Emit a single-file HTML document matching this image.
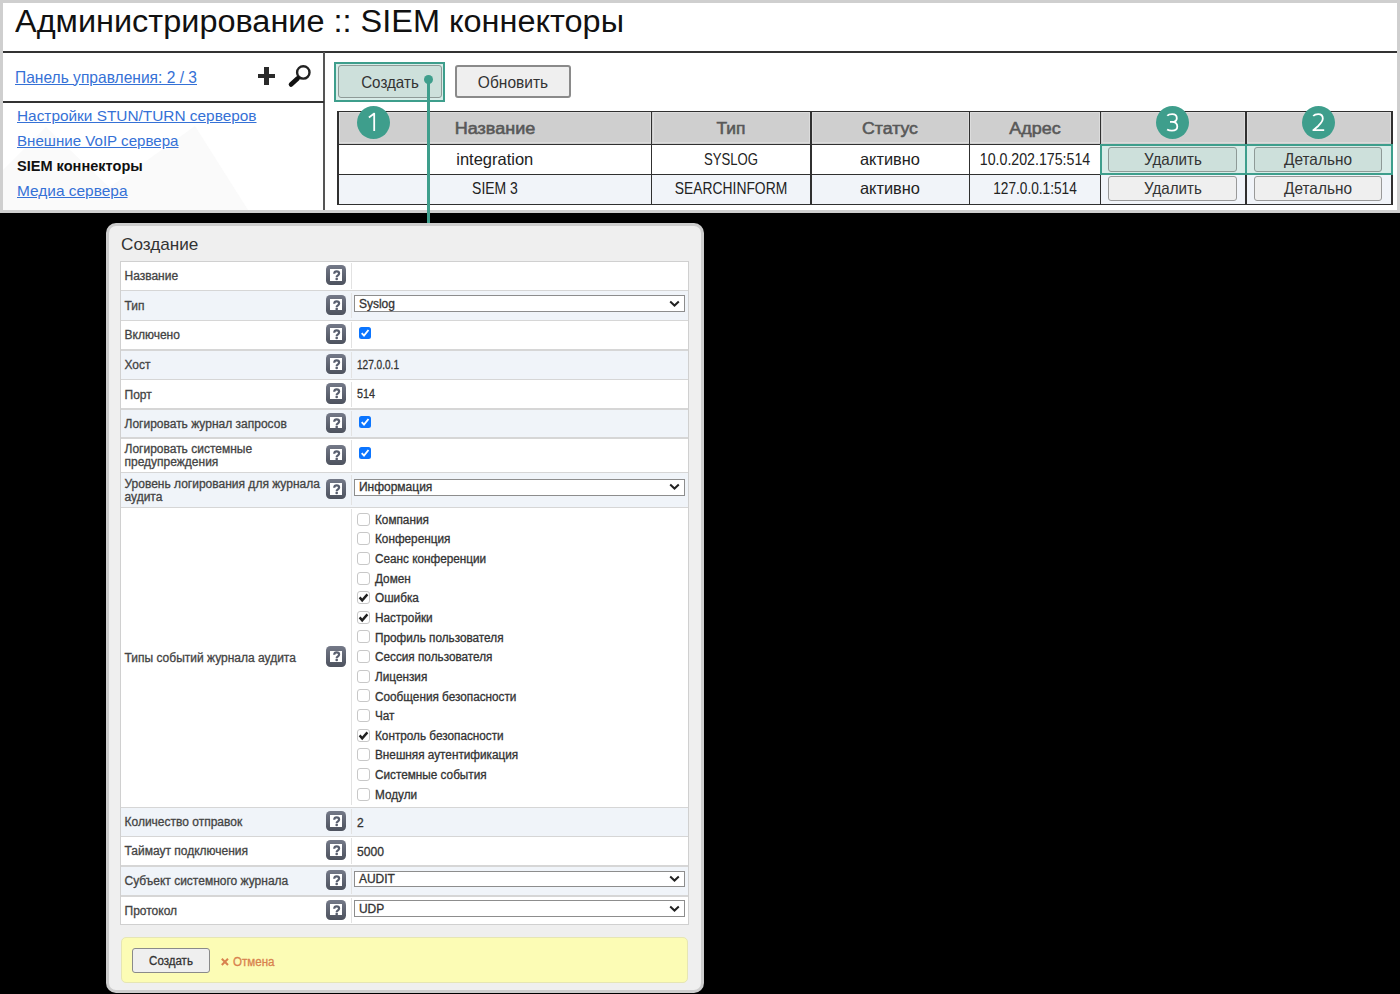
<!DOCTYPE html>
<html><head><meta charset="utf-8"><style>
html,body{margin:0;padding:0;background:#000;}
body{width:1400px;height:994px;background:#000;position:relative;overflow:hidden;font-family:"Liberation Sans", sans-serif;}
body>div,body>svg{position:absolute;}
.hi{width:20.4px;height:20.4px;border-radius:4.5px;background:linear-gradient(#747988,#4d525e);}
.hi i{position:absolute;left:4.7px;top:4.2px;width:11.6px;height:11.6px;background:#fff;}
</style></head><body>
<div style="left:0px;top:0px;width:1400px;height:213px;background:#cfcfcf;"></div>
<div style="left:3px;top:3px;width:1394px;height:207px;background:#fff;"></div>
<div id="t1" style="left:15px;transform-origin:0 50%;top:6px;font-size:31px;line-height:31px;color:#111;font-weight:400;white-space:nowrap;transform:scaleX(1.0471);"><span>Администрирование :: SIEM коннекторы</span></div>
<div style="left:3px;top:51px;width:1394px;height:2px;background:#333;"></div>
<div style="left:323px;top:52px;width:2px;height:158px;background:#555;"></div>
<div style="left:3px;top:101px;width:321px;height:2px;background:#333;"></div>
<svg style="left:3px;top:120px" width="300" height="90"><polygon points="-40,90 43,7 130,90" fill="#fafafa"/><polygon points="75,90 192,6 245,90" fill="#fafafa"/></svg>
<div id="t2" style="left:15px;transform-origin:0 50%;top:68.8px;font-size:16.5px;line-height:16.5px;color:#3571d6;font-weight:400;white-space:nowrap;transform:scaleX(0.9437);text-decoration:underline;"><span>Панель управления: 2 / 3</span></div>
<div style="left:258px;top:73.5px;width:17px;height:4.6px;background:#2a2a2a;"></div>
<div style="left:264px;top:67px;width:5px;height:18px;background:#2a2a2a;"></div>
<svg style="left:285px;top:62px" width="26" height="28"><circle cx="18.3" cy="10.4" r="6.2" fill="none" stroke="#222" stroke-width="2.4"/><line x1="6" y1="22.5" x2="12.6" y2="16.5" stroke="#111" stroke-width="4.6" stroke-linecap="round"/></svg>
<div id="t3" style="left:16.5px;transform-origin:0 50%;top:109.4px;font-size:14.5px;line-height:14.5px;color:#3571d6;font-weight:400;white-space:nowrap;transform:scaleX(1.0609);text-decoration:underline;"><span>Настройки STUN/TURN серверов</span></div>
<div id="t4" style="left:16.5px;transform-origin:0 50%;top:133.5px;font-size:14.5px;line-height:14.5px;color:#3571d6;font-weight:400;white-space:nowrap;transform:scaleX(1.0413);text-decoration:underline;"><span>Внешние VoIP сервера</span></div>
<div id="t5" style="left:16.5px;transform-origin:0 50%;top:159px;font-size:14.5px;line-height:14.5px;color:#111;font-weight:700;white-space:nowrap;transform:scaleX(1.0036);"><span>SIEM коннекторы</span></div>
<div id="t6" style="left:16.5px;transform-origin:0 50%;top:183.6px;font-size:14.5px;line-height:14.5px;color:#3571d6;font-weight:400;white-space:nowrap;transform:scaleX(1.0649);text-decoration:underline;"><span>Медиа сервера</span></div>
<div style="left:334.2px;top:62.3px;width:110.9px;height:39.8px;border:2px solid #3e9e8c;box-sizing:border-box;background:#d9ece8;"></div>
<div style="left:337.5px;top:65.3px;width:104.2px;height:33.2px;border:1.6px solid #8e9a97;border-radius:3px;box-sizing:border-box;background:#cde0db;"></div>
<div id="t7" style="left:-10.5px;width:800px;text-align:center;transform-origin:50% 50%;top:74px;font-size:16.5px;line-height:16.5px;color:#333;font-weight:400;white-space:nowrap;transform:scaleX(0.9200);"><span>Создать</span></div>
<div style="left:455px;top:65.3px;width:116px;height:32.6px;border:2px solid #8a8a8a;border-radius:3px;box-sizing:border-box;background:#efefef;"></div>
<div id="t8" style="left:113px;width:800px;text-align:center;transform-origin:50% 50%;top:73.6px;font-size:16.5px;line-height:16.5px;color:#333;font-weight:400;white-space:nowrap;transform:scaleX(0.9409);"><span>Обновить</span></div>
<div style="left:338px;top:111px;width:1054px;height:33px;background:#cfcfcf;"></div>
<div style="left:338px;top:144px;width:1054px;height:30px;background:#fff;"></div>
<div style="left:338px;top:174px;width:1054px;height:30.5px;background:#f1f4f9;"></div>
<div style="left:339px;top:112px;width:311.7px;height:31.4px;box-shadow:inset 0 0 0 1px #dcdcdc;"></div>
<div style="left:652.5px;top:112px;width:157.40000000000003px;height:31.4px;box-shadow:inset 0 0 0 1px #dcdcdc;"></div>
<div style="left:811.7px;top:112px;width:156.89999999999992px;height:31.4px;box-shadow:inset 0 0 0 1px #dcdcdc;"></div>
<div style="left:970.4px;top:112px;width:129.3px;height:31.4px;box-shadow:inset 0 0 0 1px #dcdcdc;"></div>
<div style="left:1101.5px;top:112px;width:143.7px;height:31.4px;box-shadow:inset 0 0 0 1px #dcdcdc;"></div>
<div style="left:1247px;top:112px;width:143.90000000000003px;height:31.4px;box-shadow:inset 0 0 0 1px #dcdcdc;"></div>
<div style="left:337.2px;top:110.7px;width:1055.3px;height:1.6px;background:#303030;"></div>
<div style="left:337.2px;top:143.7px;width:1055.3px;height:1.6px;background:#303030;"></div>
<div style="left:337.2px;top:173.7px;width:1055.3px;height:1.6px;background:#303030;"></div>
<div style="left:337.2px;top:203.7px;width:1055.3px;height:1.6px;background:#303030;"></div>
<div style="left:337.3px;top:110.7px;width:1.6px;height:94.4px;background:#303030;"></div>
<div style="left:650.8px;top:110.7px;width:1.6px;height:94.4px;background:#303030;"></div>
<div style="left:810.0px;top:110.7px;width:1.6px;height:94.4px;background:#303030;"></div>
<div style="left:968.6999999999999px;top:110.7px;width:1.6px;height:94.4px;background:#303030;"></div>
<div style="left:1099.8px;top:110.7px;width:1.6px;height:94.4px;background:#303030;"></div>
<div style="left:1245.3px;top:110.7px;width:1.6px;height:94.4px;background:#303030;"></div>
<div style="left:1391.0px;top:110.7px;width:1.6px;height:94.4px;background:#303030;"></div>
<div id="t9" style="left:94.75px;width:800px;text-align:center;transform-origin:50% 50%;top:120.4px;font-size:16.5px;line-height:16.5px;color:#585858;font-weight:400;white-space:nowrap;transform:scaleX(1.0918);-webkit-text-stroke:0.55px #585858;"><span>Название</span></div>
<div id="t10" style="left:331.1px;width:800px;text-align:center;transform-origin:50% 50%;top:120.4px;font-size:16.5px;line-height:16.5px;color:#585858;font-weight:400;white-space:nowrap;transform:scaleX(1.0539);-webkit-text-stroke:0.55px #585858;"><span>Тип</span></div>
<div id="t11" style="left:490.04999999999995px;width:800px;text-align:center;transform-origin:50% 50%;top:120.4px;font-size:16.5px;line-height:16.5px;color:#585858;font-weight:400;white-space:nowrap;transform:scaleX(1.0734);-webkit-text-stroke:0.55px #585858;"><span>Статус</span></div>
<div id="t12" style="left:634.95px;width:800px;text-align:center;transform-origin:50% 50%;top:120.4px;font-size:16.5px;line-height:16.5px;color:#585858;font-weight:400;white-space:nowrap;transform:scaleX(1.0878);-webkit-text-stroke:0.55px #585858;"><span>Адрес</span></div>
<div id="t13" style="left:94.75px;width:800px;text-align:center;transform-origin:50% 50%;top:150.7px;font-size:16.5px;line-height:16.5px;color:#222;font-weight:400;white-space:nowrap;"><span>integration</span></div>
<div id="t14" style="left:331.1px;width:800px;text-align:center;transform-origin:50% 50%;top:150.7px;font-size:16.5px;line-height:16.5px;color:#222;font-weight:400;white-space:nowrap;transform:scaleX(0.7956);"><span>SYSLOG</span></div>
<div id="t15" style="left:490.04999999999995px;width:800px;text-align:center;transform-origin:50% 50%;top:150.7px;font-size:16.5px;line-height:16.5px;color:#222;font-weight:400;white-space:nowrap;transform:scaleX(0.9930);"><span>активно</span></div>
<div id="t16" style="left:634.95px;width:800px;text-align:center;transform-origin:50% 50%;top:150.7px;font-size:16.5px;line-height:16.5px;color:#222;font-weight:400;white-space:nowrap;transform:scaleX(0.8594);"><span>10.0.202.175:514</span></div>
<div id="t17" style="left:94.75px;width:800px;text-align:center;transform-origin:50% 50%;top:180.4px;font-size:16.5px;line-height:16.5px;color:#222;font-weight:400;white-space:nowrap;transform:scaleX(0.8464);"><span>SIEM 3</span></div>
<div id="t18" style="left:331.1px;width:800px;text-align:center;transform-origin:50% 50%;top:180.4px;font-size:16.5px;line-height:16.5px;color:#222;font-weight:400;white-space:nowrap;transform:scaleX(0.8398);"><span>SEARCHINFORM</span></div>
<div id="t19" style="left:490.04999999999995px;width:800px;text-align:center;transform-origin:50% 50%;top:180.4px;font-size:16.5px;line-height:16.5px;color:#222;font-weight:400;white-space:nowrap;transform:scaleX(0.9930);"><span>активно</span></div>
<div id="t20" style="left:634.95px;width:800px;text-align:center;transform-origin:50% 50%;top:180.4px;font-size:16.5px;line-height:16.5px;color:#222;font-weight:400;white-space:nowrap;transform:scaleX(0.8282);"><span>127.0.0.1:514</span></div>
<div style="left:1100px;top:143.5px;width:292.5px;height:31px;border:2px solid #3e9e8c;box-sizing:border-box;background:#d9ece8;"></div>
<div style="left:1245px;top:143.5px;width:2px;height:31px;background:#3e9e8c;"></div>
<div style="left:1108px;top:146.9px;width:129px;height:25px;border:1.5px solid #8e9a97;border-radius:3px;box-sizing:border-box;background:#cde0db;"></div>
<div style="left:1108px;top:176px;width:129px;height:25.2px;border:1.5px solid #999;border-radius:3px;box-sizing:border-box;background:#efefef;"></div>
<div id="t21" style="left:772.5px;width:800px;text-align:center;transform-origin:50% 50%;top:150.6px;font-size:16.5px;line-height:16.5px;color:#333;font-weight:400;white-space:nowrap;transform:scaleX(0.9175);"><span>Удалить</span></div>
<div id="t22" style="left:772.5px;width:800px;text-align:center;transform-origin:50% 50%;top:179.8px;font-size:16.5px;line-height:16.5px;color:#333;font-weight:400;white-space:nowrap;transform:scaleX(0.9175);"><span>Удалить</span></div>
<div style="left:1254.4px;top:146.9px;width:128.0999999999999px;height:25px;border:1.5px solid #8e9a97;border-radius:3px;box-sizing:border-box;background:#cde0db;"></div>
<div style="left:1254.4px;top:176px;width:128.0999999999999px;height:25.2px;border:1.5px solid #999;border-radius:3px;box-sizing:border-box;background:#efefef;"></div>
<div id="t23" style="left:918.45px;width:800px;text-align:center;transform-origin:50% 50%;top:150.6px;font-size:16.5px;line-height:16.5px;color:#333;font-weight:400;white-space:nowrap;transform:scaleX(0.9331);"><span>Детально</span></div>
<div id="t24" style="left:918.45px;width:800px;text-align:center;transform-origin:50% 50%;top:179.8px;font-size:16.5px;line-height:16.5px;color:#333;font-weight:400;white-space:nowrap;transform:scaleX(0.9331);"><span>Детально</span></div>
<div style="left:427.4px;top:80px;width:2.2px;height:144px;background:#3e9e8c;"></div>
<div style="left:423.7px;top:75.4px;width:9px;height:9px;border-radius:50%;background:#3e9e8c;"></div>
<svg style="left:356.5px;top:105.7px" width="33" height="33"><circle cx="16.5" cy="16.5" r="16.5" fill="#3e9e8c"/><path d="M11.9 11.4 L17.2 7.6 L17.2 25" fill="none" stroke="#fff" stroke-width="1.8" stroke-linejoin="round"/></svg>
<svg style="left:1156.2px;top:105.6px" width="33" height="33"><circle cx="16.5" cy="16.5" r="16.5" fill="#3e9e8c"/><path d="M11.3 9.8 C12.5 8.3 14.2 8.2 16.2 8.2 C19.3 8.2 20.8 9.9 20.8 12.2 C20.8 14.6 18.8 15.9 16 15.9 L14 15.9 M16 15.9 C19.4 15.9 21.3 17.8 21.3 20.6 C21.3 23.3 19.2 24.7 15.9 24.7 C13.8 24.7 12.3 24.2 11.1 23.4" fill="none" stroke="#fff" stroke-width="1.8" stroke-linejoin="round"/></svg>
<svg style="left:1301.9px;top:105.7px" width="33" height="33"><circle cx="16.5" cy="16.5" r="16.5" fill="#3e9e8c"/><path d="M11.2 10 C12.4 8.6 14.1 8.1 16.2 8.1 C19.2 8.1 20.8 9.9 20.8 12.6 C20.8 15.3 18.9 17.4 16.5 19.7 L11.3 24.2 L22.2 24.2" fill="none" stroke="#fff" stroke-width="1.8" stroke-linejoin="round"/></svg>
<div style="left:106px;top:223px;width:598px;height:770px;box-sizing:border-box;border:3px solid #cdcdcd;border-radius:10px;background:#efefef;"></div>
<div id="t25" style="left:121px;transform-origin:0 50%;top:235.6px;font-size:17px;line-height:17px;color:#333;font-weight:400;white-space:nowrap;transform:scaleX(1.0093);"><span>Создание</span></div>
<div style="left:120px;top:261px;width:568.5px;height:664.4px;background:#fff;border:1px solid #d0d0d0;box-sizing:border-box;"></div>
<div style="left:121px;top:290.6px;width:566.5px;height:29.599999999999966px;background:#f0f4f9;"></div>
<div style="left:121px;top:349.9px;width:566.5px;height:29.700000000000045px;background:#f0f4f9;"></div>
<div style="left:121px;top:408.8px;width:566.5px;height:29.30000000000001px;background:#f0f4f9;"></div>
<div style="left:121px;top:472.6px;width:566.5px;height:34.799999999999955px;background:#f0f4f9;"></div>
<div style="left:121px;top:807.3px;width:566.5px;height:29.0px;background:#f0f4f9;"></div>
<div style="left:121px;top:865.7px;width:566.5px;height:30.09999999999991px;background:#f0f4f9;"></div>
<div style="left:121px;top:289.90000000000003px;width:566.5px;height:1.5px;background:#d6d6d6;"></div>
<div style="left:121px;top:319.5px;width:566.5px;height:1.5px;background:#d6d6d6;"></div>
<div style="left:121px;top:349.2px;width:566.5px;height:1.5px;background:#d6d6d6;"></div>
<div style="left:121px;top:378.90000000000003px;width:566.5px;height:1.5px;background:#d6d6d6;"></div>
<div style="left:121px;top:408.1px;width:566.5px;height:1.5px;background:#d6d6d6;"></div>
<div style="left:121px;top:437.40000000000003px;width:566.5px;height:1.5px;background:#d6d6d6;"></div>
<div style="left:121px;top:471.90000000000003px;width:566.5px;height:1.5px;background:#d6d6d6;"></div>
<div style="left:121px;top:506.7px;width:566.5px;height:1.5px;background:#d6d6d6;"></div>
<div style="left:121px;top:806.5999999999999px;width:566.5px;height:1.5px;background:#d6d6d6;"></div>
<div style="left:121px;top:835.5999999999999px;width:566.5px;height:1.5px;background:#d6d6d6;"></div>
<div style="left:121px;top:865.0px;width:566.5px;height:1.5px;background:#d6d6d6;"></div>
<div style="left:121px;top:895.0999999999999px;width:566.5px;height:1.5px;background:#d6d6d6;"></div>
<div id="t26" style="left:124.5px;transform-origin:0 50%;top:270.1px;font-size:12px;line-height:12px;color:#444;font-weight:400;white-space:nowrap;-webkit-text-stroke:0.3px #444;"><span>Название</span></div>
<div class="hi" style="left:325.8px;top:264.9px;"><i></i><svg width="21" height="21" style="position:absolute;left:0;top:0"><path d="M8.2 8.8 C8.3 7.1 9.4 6.4 10.6 6.4 C12.1 6.4 13.1 7.3 13.1 8.5 C13.1 9.6 12.4 10.1 11.7 10.6 C11 11.1 10.7 11.4 10.7 12.1" fill="none" stroke="#585e6e" stroke-width="2.2"/><circle cx="10.7" cy="13.9" r="1.3" fill="#585e6e"/></svg></div>
<div style="left:350.5px;top:263px;width:1.5px;height:25.600000000000023px;background:#e2e2e2;"></div>
<div id="t27" style="left:124.5px;transform-origin:0 50%;top:299.7px;font-size:12px;line-height:12px;color:#444;font-weight:400;white-space:nowrap;-webkit-text-stroke:0.3px #444;"><span>Тип</span></div>
<div class="hi" style="left:325.8px;top:294.5px;"><i></i><svg width="21" height="21" style="position:absolute;left:0;top:0"><path d="M8.2 8.8 C8.3 7.1 9.4 6.4 10.6 6.4 C12.1 6.4 13.1 7.3 13.1 8.5 C13.1 9.6 12.4 10.1 11.7 10.6 C11 11.1 10.7 11.4 10.7 12.1" fill="none" stroke="#585e6e" stroke-width="2.2"/><circle cx="10.7" cy="13.9" r="1.3" fill="#585e6e"/></svg></div>
<div style="left:350.5px;top:292.6px;width:1.5px;height:25.599999999999966px;background:#e2e2e2;"></div>
<div id="t28" style="left:124.5px;transform-origin:0 50%;top:329.34999999999997px;font-size:12px;line-height:12px;color:#444;font-weight:400;white-space:nowrap;-webkit-text-stroke:0.3px #444;"><span>Включено</span></div>
<div class="hi" style="left:325.8px;top:324.1px;"><i></i><svg width="21" height="21" style="position:absolute;left:0;top:0"><path d="M8.2 8.8 C8.3 7.1 9.4 6.4 10.6 6.4 C12.1 6.4 13.1 7.3 13.1 8.5 C13.1 9.6 12.4 10.1 11.7 10.6 C11 11.1 10.7 11.4 10.7 12.1" fill="none" stroke="#585e6e" stroke-width="2.2"/><circle cx="10.7" cy="13.9" r="1.3" fill="#585e6e"/></svg></div>
<div style="left:350.5px;top:322.2px;width:1.5px;height:25.69999999999999px;background:#e2e2e2;"></div>
<div id="t29" style="left:124.5px;transform-origin:0 50%;top:359.05px;font-size:12px;line-height:12px;color:#444;font-weight:400;white-space:nowrap;-webkit-text-stroke:0.3px #444;"><span>Хост</span></div>
<div class="hi" style="left:325.8px;top:353.9px;"><i></i><svg width="21" height="21" style="position:absolute;left:0;top:0"><path d="M8.2 8.8 C8.3 7.1 9.4 6.4 10.6 6.4 C12.1 6.4 13.1 7.3 13.1 8.5 C13.1 9.6 12.4 10.1 11.7 10.6 C11 11.1 10.7 11.4 10.7 12.1" fill="none" stroke="#585e6e" stroke-width="2.2"/><circle cx="10.7" cy="13.9" r="1.3" fill="#585e6e"/></svg></div>
<div style="left:350.5px;top:351.9px;width:1.5px;height:25.700000000000045px;background:#e2e2e2;"></div>
<div id="t30" style="left:124.5px;transform-origin:0 50%;top:388.50000000000006px;font-size:12px;line-height:12px;color:#444;font-weight:400;white-space:nowrap;-webkit-text-stroke:0.3px #444;"><span>Порт</span></div>
<div class="hi" style="left:325.8px;top:383.3px;"><i></i><svg width="21" height="21" style="position:absolute;left:0;top:0"><path d="M8.2 8.8 C8.3 7.1 9.4 6.4 10.6 6.4 C12.1 6.4 13.1 7.3 13.1 8.5 C13.1 9.6 12.4 10.1 11.7 10.6 C11 11.1 10.7 11.4 10.7 12.1" fill="none" stroke="#585e6e" stroke-width="2.2"/><circle cx="10.7" cy="13.9" r="1.3" fill="#585e6e"/></svg></div>
<div style="left:350.5px;top:381.6px;width:1.5px;height:25.19999999999999px;background:#e2e2e2;"></div>
<div id="t31" style="left:124.5px;transform-origin:0 50%;top:417.75000000000006px;font-size:12px;line-height:12px;color:#444;font-weight:400;white-space:nowrap;-webkit-text-stroke:0.3px #444;"><span>Логировать журнал запросов</span></div>
<div class="hi" style="left:325.8px;top:412.6px;"><i></i><svg width="21" height="21" style="position:absolute;left:0;top:0"><path d="M8.2 8.8 C8.3 7.1 9.4 6.4 10.6 6.4 C12.1 6.4 13.1 7.3 13.1 8.5 C13.1 9.6 12.4 10.1 11.7 10.6 C11 11.1 10.7 11.4 10.7 12.1" fill="none" stroke="#585e6e" stroke-width="2.2"/><circle cx="10.7" cy="13.9" r="1.3" fill="#585e6e"/></svg></div>
<div style="left:350.5px;top:410.8px;width:1.5px;height:25.30000000000001px;background:#e2e2e2;"></div>
<div id="t32" style="left:124.5px;transform-origin:0 50%;top:443.05px;font-size:12px;line-height:12px;color:#444;font-weight:400;white-space:nowrap;-webkit-text-stroke:0.3px #444;"><span>Логировать системные</span></div>
<div id="t33" style="left:124.5px;transform-origin:0 50%;top:456.35px;font-size:12px;line-height:12px;color:#444;font-weight:400;white-space:nowrap;-webkit-text-stroke:0.3px #444;"><span>предупреждения</span></div>
<div class="hi" style="left:325.8px;top:444.5px;"><i></i><svg width="21" height="21" style="position:absolute;left:0;top:0"><path d="M8.2 8.8 C8.3 7.1 9.4 6.4 10.6 6.4 C12.1 6.4 13.1 7.3 13.1 8.5 C13.1 9.6 12.4 10.1 11.7 10.6 C11 11.1 10.7 11.4 10.7 12.1" fill="none" stroke="#585e6e" stroke-width="2.2"/><circle cx="10.7" cy="13.9" r="1.3" fill="#585e6e"/></svg></div>
<div style="left:350.5px;top:440.1px;width:1.5px;height:30.5px;background:#e2e2e2;"></div>
<div id="t34" style="left:124.5px;transform-origin:0 50%;top:477.7px;font-size:12px;line-height:12px;color:#444;font-weight:400;white-space:nowrap;-webkit-text-stroke:0.3px #444;"><span>Уровень логирования для журнала</span></div>
<div id="t35" style="left:124.5px;transform-origin:0 50%;top:491.0px;font-size:12px;line-height:12px;color:#444;font-weight:400;white-space:nowrap;-webkit-text-stroke:0.3px #444;"><span>аудита</span></div>
<div class="hi" style="left:325.8px;top:479.1px;"><i></i><svg width="21" height="21" style="position:absolute;left:0;top:0"><path d="M8.2 8.8 C8.3 7.1 9.4 6.4 10.6 6.4 C12.1 6.4 13.1 7.3 13.1 8.5 C13.1 9.6 12.4 10.1 11.7 10.6 C11 11.1 10.7 11.4 10.7 12.1" fill="none" stroke="#585e6e" stroke-width="2.2"/><circle cx="10.7" cy="13.9" r="1.3" fill="#585e6e"/></svg></div>
<div style="left:350.5px;top:474.6px;width:1.5px;height:30.799999999999955px;background:#e2e2e2;"></div>
<div id="t36" style="left:124.5px;transform-origin:0 50%;top:651.6499999999999px;font-size:12px;line-height:12px;color:#444;font-weight:400;white-space:nowrap;-webkit-text-stroke:0.3px #444;"><span>Типы событий журнала аудита</span></div>
<div class="hi" style="left:325.8px;top:646.4px;"><i></i><svg width="21" height="21" style="position:absolute;left:0;top:0"><path d="M8.2 8.8 C8.3 7.1 9.4 6.4 10.6 6.4 C12.1 6.4 13.1 7.3 13.1 8.5 C13.1 9.6 12.4 10.1 11.7 10.6 C11 11.1 10.7 11.4 10.7 12.1" fill="none" stroke="#585e6e" stroke-width="2.2"/><circle cx="10.7" cy="13.9" r="1.3" fill="#585e6e"/></svg></div>
<div style="left:350.5px;top:509.4px;width:1.5px;height:295.9px;background:#e2e2e2;"></div>
<div id="t37" style="left:124.5px;transform-origin:0 50%;top:816.0999999999999px;font-size:12px;line-height:12px;color:#444;font-weight:400;white-space:nowrap;-webkit-text-stroke:0.3px #444;"><span>Количество отправок</span></div>
<div class="hi" style="left:325.8px;top:810.9px;"><i></i><svg width="21" height="21" style="position:absolute;left:0;top:0"><path d="M8.2 8.8 C8.3 7.1 9.4 6.4 10.6 6.4 C12.1 6.4 13.1 7.3 13.1 8.5 C13.1 9.6 12.4 10.1 11.7 10.6 C11 11.1 10.7 11.4 10.7 12.1" fill="none" stroke="#585e6e" stroke-width="2.2"/><circle cx="10.7" cy="13.9" r="1.3" fill="#585e6e"/></svg></div>
<div style="left:350.5px;top:809.3px;width:1.5px;height:25.0px;background:#e2e2e2;"></div>
<div id="t38" style="left:124.5px;transform-origin:0 50%;top:845.3px;font-size:12px;line-height:12px;color:#444;font-weight:400;white-space:nowrap;-webkit-text-stroke:0.3px #444;"><span>Таймаут подключения</span></div>
<div class="hi" style="left:325.8px;top:840.1px;"><i></i><svg width="21" height="21" style="position:absolute;left:0;top:0"><path d="M8.2 8.8 C8.3 7.1 9.4 6.4 10.6 6.4 C12.1 6.4 13.1 7.3 13.1 8.5 C13.1 9.6 12.4 10.1 11.7 10.6 C11 11.1 10.7 11.4 10.7 12.1" fill="none" stroke="#585e6e" stroke-width="2.2"/><circle cx="10.7" cy="13.9" r="1.3" fill="#585e6e"/></svg></div>
<div style="left:350.5px;top:838.3px;width:1.5px;height:25.40000000000009px;background:#e2e2e2;"></div>
<div id="t39" style="left:124.5px;transform-origin:0 50%;top:875.05px;font-size:12px;line-height:12px;color:#444;font-weight:400;white-space:nowrap;-webkit-text-stroke:0.3px #444;"><span>Субъект системного журнала</span></div>
<div class="hi" style="left:325.8px;top:869.9px;"><i></i><svg width="21" height="21" style="position:absolute;left:0;top:0"><path d="M8.2 8.8 C8.3 7.1 9.4 6.4 10.6 6.4 C12.1 6.4 13.1 7.3 13.1 8.5 C13.1 9.6 12.4 10.1 11.7 10.6 C11 11.1 10.7 11.4 10.7 12.1" fill="none" stroke="#585e6e" stroke-width="2.2"/><circle cx="10.7" cy="13.9" r="1.3" fill="#585e6e"/></svg></div>
<div style="left:350.5px;top:867.7px;width:1.5px;height:26.09999999999991px;background:#e2e2e2;"></div>
<div id="t40" style="left:124.5px;transform-origin:0 50%;top:904.8999999999999px;font-size:12px;line-height:12px;color:#444;font-weight:400;white-space:nowrap;-webkit-text-stroke:0.3px #444;"><span>Протокол</span></div>
<div class="hi" style="left:325.8px;top:899.7px;"><i></i><svg width="21" height="21" style="position:absolute;left:0;top:0"><path d="M8.2 8.8 C8.3 7.1 9.4 6.4 10.6 6.4 C12.1 6.4 13.1 7.3 13.1 8.5 C13.1 9.6 12.4 10.1 11.7 10.6 C11 11.1 10.7 11.4 10.7 12.1" fill="none" stroke="#585e6e" stroke-width="2.2"/><circle cx="10.7" cy="13.9" r="1.3" fill="#585e6e"/></svg></div>
<div style="left:350.5px;top:897.8px;width:1.5px;height:25.600000000000023px;background:#e2e2e2;"></div>
<div style="left:354.2px;top:294.9px;width:330.8px;height:17.30000000000001px;box-sizing:border-box;border:1.5px solid #8d8d8d;background:#fff;"></div>
<svg style="left:668px;top:299.5px" width="13" height="8"><polyline points="2.2,1.6 6.5,5.6 10.8,1.6" fill="none" stroke="#222" stroke-width="2"/></svg>
<div id="t41" style="left:358.9px;transform-origin:0 50%;top:297.74999999999994px;font-size:12px;line-height:12px;color:#333;font-weight:400;white-space:nowrap;-webkit-text-stroke:0.3px #333;"><span>Syslog</span></div>
<div style="left:358.79999999999995px;top:326.8px;width:12px;height:12px;border-radius:2.5px;background:#0b75ff;"></div>
<svg style="left:358.79999999999995px;top:326.8px" width="12" height="12"><polyline points="2.7,6.2 5,8.6 9.5,3" fill="none" stroke="#fff" stroke-width="1.9"/></svg>
<div id="t42" style="left:356.9px;transform-origin:0 50%;top:358.9px;font-size:12px;line-height:12px;color:#333;font-weight:400;white-space:nowrap;transform:scaleX(0.8392);-webkit-text-stroke:0.3px #333;"><span>127.0.0.1</span></div>
<div id="t43" style="left:356.9px;transform-origin:0 50%;top:388.3px;font-size:12px;line-height:12px;color:#333;font-weight:400;white-space:nowrap;transform:scaleX(0.8986);-webkit-text-stroke:0.3px #333;"><span>514</span></div>
<div style="left:358.79999999999995px;top:415.5px;width:12px;height:12px;border-radius:2.5px;background:#0b75ff;"></div>
<svg style="left:358.79999999999995px;top:415.5px" width="12" height="12"><polyline points="2.7,6.2 5,8.6 9.5,3" fill="none" stroke="#fff" stroke-width="1.9"/></svg>
<div style="left:358.79999999999995px;top:447.3px;width:12px;height:12px;border-radius:2.5px;background:#0b75ff;"></div>
<svg style="left:358.79999999999995px;top:447.3px" width="12" height="12"><polyline points="2.7,6.2 5,8.6 9.5,3" fill="none" stroke="#fff" stroke-width="1.9"/></svg>
<div style="left:354.2px;top:478.5px;width:330.8px;height:17.5px;box-sizing:border-box;border:1.5px solid #8d8d8d;background:#fff;"></div>
<svg style="left:668px;top:483.2px" width="13" height="8"><polyline points="2.2,1.6 6.5,5.6 10.8,1.6" fill="none" stroke="#222" stroke-width="2"/></svg>
<div id="t44" style="left:358.9px;transform-origin:0 50%;top:481.45px;font-size:12px;line-height:12px;color:#333;font-weight:400;white-space:nowrap;-webkit-text-stroke:0.3px #333;"><span>Информация</span></div>
<div style="left:357.3px;top:512.60px;width:13px;height:13px;box-sizing:border-box;border:1.5px solid #c8c8c8;border-radius:3px;background:#fff;"></div>
<div id="t45" style="left:374.9px;transform-origin:0 50%;top:513.8000000000001px;font-size:12px;line-height:12px;color:#333;font-weight:400;white-space:nowrap;transform:scaleX(0.9800);-webkit-text-stroke:0.3px #333;"><span>Компания</span></div>
<div style="left:357.3px;top:532.24px;width:13px;height:13px;box-sizing:border-box;border:1.5px solid #c8c8c8;border-radius:3px;background:#fff;"></div>
<div id="t46" style="left:374.9px;transform-origin:0 50%;top:533.44px;font-size:12px;line-height:12px;color:#333;font-weight:400;white-space:nowrap;transform:scaleX(0.9800);-webkit-text-stroke:0.3px #333;"><span>Конференция</span></div>
<div style="left:357.3px;top:551.88px;width:13px;height:13px;box-sizing:border-box;border:1.5px solid #c8c8c8;border-radius:3px;background:#fff;"></div>
<div id="t47" style="left:374.9px;transform-origin:0 50%;top:553.08px;font-size:12px;line-height:12px;color:#333;font-weight:400;white-space:nowrap;transform:scaleX(0.9800);-webkit-text-stroke:0.3px #333;"><span>Сеанс конференции</span></div>
<div style="left:357.3px;top:571.52px;width:13px;height:13px;box-sizing:border-box;border:1.5px solid #c8c8c8;border-radius:3px;background:#fff;"></div>
<div id="t48" style="left:374.9px;transform-origin:0 50%;top:572.72px;font-size:12px;line-height:12px;color:#333;font-weight:400;white-space:nowrap;transform:scaleX(0.9800);-webkit-text-stroke:0.3px #333;"><span>Домен</span></div>
<div style="left:357.3px;top:591.16px;width:13px;height:13px;box-sizing:border-box;border:1.5px solid #c8c8c8;border-radius:3px;background:#fff;"></div>
<svg style="left:357.3px;top:591.16px" width="13" height="13"><polyline points="2.6,6.4 5.2,9.4 10.4,3.4" fill="none" stroke="#222" stroke-width="2.4"/></svg>
<div id="t49" style="left:374.9px;transform-origin:0 50%;top:592.3600000000001px;font-size:12px;line-height:12px;color:#333;font-weight:400;white-space:nowrap;transform:scaleX(0.9800);-webkit-text-stroke:0.3px #333;"><span>Ошибка</span></div>
<div style="left:357.3px;top:610.80px;width:13px;height:13px;box-sizing:border-box;border:1.5px solid #c8c8c8;border-radius:3px;background:#fff;"></div>
<svg style="left:357.3px;top:610.80px" width="13" height="13"><polyline points="2.6,6.4 5.2,9.4 10.4,3.4" fill="none" stroke="#222" stroke-width="2.4"/></svg>
<div id="t50" style="left:374.9px;transform-origin:0 50%;top:612.0000000000001px;font-size:12px;line-height:12px;color:#333;font-weight:400;white-space:nowrap;transform:scaleX(0.9800);-webkit-text-stroke:0.3px #333;"><span>Настройки</span></div>
<div style="left:357.3px;top:630.44px;width:13px;height:13px;box-sizing:border-box;border:1.5px solid #c8c8c8;border-radius:3px;background:#fff;"></div>
<div id="t51" style="left:374.9px;transform-origin:0 50%;top:631.6400000000001px;font-size:12px;line-height:12px;color:#333;font-weight:400;white-space:nowrap;transform:scaleX(0.9800);-webkit-text-stroke:0.3px #333;"><span>Профиль пользователя</span></div>
<div style="left:357.3px;top:650.08px;width:13px;height:13px;box-sizing:border-box;border:1.5px solid #c8c8c8;border-radius:3px;background:#fff;"></div>
<div id="t52" style="left:374.9px;transform-origin:0 50%;top:651.2800000000001px;font-size:12px;line-height:12px;color:#333;font-weight:400;white-space:nowrap;transform:scaleX(0.9800);-webkit-text-stroke:0.3px #333;"><span>Сессия пользователя</span></div>
<div style="left:357.3px;top:669.72px;width:13px;height:13px;box-sizing:border-box;border:1.5px solid #c8c8c8;border-radius:3px;background:#fff;"></div>
<div id="t53" style="left:374.9px;transform-origin:0 50%;top:670.9200000000001px;font-size:12px;line-height:12px;color:#333;font-weight:400;white-space:nowrap;transform:scaleX(0.9800);-webkit-text-stroke:0.3px #333;"><span>Лицензия</span></div>
<div style="left:357.3px;top:689.36px;width:13px;height:13px;box-sizing:border-box;border:1.5px solid #c8c8c8;border-radius:3px;background:#fff;"></div>
<div id="t54" style="left:374.9px;transform-origin:0 50%;top:690.5600000000001px;font-size:12px;line-height:12px;color:#333;font-weight:400;white-space:nowrap;transform:scaleX(0.9800);-webkit-text-stroke:0.3px #333;"><span>Сообщения безопасности</span></div>
<div style="left:357.3px;top:709.00px;width:13px;height:13px;box-sizing:border-box;border:1.5px solid #c8c8c8;border-radius:3px;background:#fff;"></div>
<div id="t55" style="left:374.9px;transform-origin:0 50%;top:710.2px;font-size:12px;line-height:12px;color:#333;font-weight:400;white-space:nowrap;transform:scaleX(0.9800);-webkit-text-stroke:0.3px #333;"><span>Чат</span></div>
<div style="left:357.3px;top:728.64px;width:13px;height:13px;box-sizing:border-box;border:1.5px solid #c8c8c8;border-radius:3px;background:#fff;"></div>
<svg style="left:357.3px;top:728.64px" width="13" height="13"><polyline points="2.6,6.4 5.2,9.4 10.4,3.4" fill="none" stroke="#222" stroke-width="2.4"/></svg>
<div id="t56" style="left:374.9px;transform-origin:0 50%;top:729.8400000000001px;font-size:12px;line-height:12px;color:#333;font-weight:400;white-space:nowrap;transform:scaleX(0.9800);-webkit-text-stroke:0.3px #333;"><span>Контроль безопасности</span></div>
<div style="left:357.3px;top:748.28px;width:13px;height:13px;box-sizing:border-box;border:1.5px solid #c8c8c8;border-radius:3px;background:#fff;"></div>
<div id="t57" style="left:374.9px;transform-origin:0 50%;top:749.48px;font-size:12px;line-height:12px;color:#333;font-weight:400;white-space:nowrap;transform:scaleX(0.9800);-webkit-text-stroke:0.3px #333;"><span>Внешняя аутентификация</span></div>
<div style="left:357.3px;top:767.92px;width:13px;height:13px;box-sizing:border-box;border:1.5px solid #c8c8c8;border-radius:3px;background:#fff;"></div>
<div id="t58" style="left:374.9px;transform-origin:0 50%;top:769.1200000000001px;font-size:12px;line-height:12px;color:#333;font-weight:400;white-space:nowrap;transform:scaleX(0.9800);-webkit-text-stroke:0.3px #333;"><span>Системные события</span></div>
<div style="left:357.3px;top:787.56px;width:13px;height:13px;box-sizing:border-box;border:1.5px solid #c8c8c8;border-radius:3px;background:#fff;"></div>
<div id="t59" style="left:374.9px;transform-origin:0 50%;top:788.7600000000001px;font-size:12px;line-height:12px;color:#333;font-weight:400;white-space:nowrap;transform:scaleX(0.9800);-webkit-text-stroke:0.3px #333;"><span>Модули</span></div>
<div id="t60" style="left:356.9px;transform-origin:0 50%;top:816.6px;font-size:12px;line-height:12px;color:#333;font-weight:400;white-space:nowrap;-webkit-text-stroke:0.3px #333;"><span>2</span></div>
<div id="t61" style="left:356.9px;transform-origin:0 50%;top:845.8px;font-size:12px;line-height:12px;color:#333;font-weight:400;white-space:nowrap;transform:scaleX(1.0111);-webkit-text-stroke:0.3px #333;"><span>5000</span></div>
<div style="left:354.2px;top:870.6px;width:330.8px;height:16.899999999999977px;box-sizing:border-box;border:1.5px solid #8d8d8d;background:#fff;"></div>
<svg style="left:668px;top:875.0px" width="13" height="8"><polyline points="2.2,1.6 6.5,5.6 10.8,1.6" fill="none" stroke="#222" stroke-width="2"/></svg>
<div id="t62" style="left:358.9px;transform-origin:0 50%;top:873.25px;font-size:12px;line-height:12px;color:#333;font-weight:400;white-space:nowrap;-webkit-text-stroke:0.3px #333;"><span>AUDIT</span></div>
<div style="left:354.2px;top:900.4px;width:330.8px;height:16.899999999999977px;box-sizing:border-box;border:1.5px solid #8d8d8d;background:#fff;"></div>
<svg style="left:668px;top:904.8px" width="13" height="8"><polyline points="2.2,1.6 6.5,5.6 10.8,1.6" fill="none" stroke="#222" stroke-width="2"/></svg>
<div id="t63" style="left:358.9px;transform-origin:0 50%;top:903.05px;font-size:12px;line-height:12px;color:#333;font-weight:400;white-space:nowrap;-webkit-text-stroke:0.3px #333;"><span>UDP</span></div>
<div style="left:120.5px;top:936.5px;width:567.5px;height:46.5px;background:#fcfcb5;border:1px solid #e6e6b4;border-radius:5px;box-sizing:border-box;"></div>
<div style="left:132.1px;top:948.2px;width:78.4px;height:24.5px;border:1.5px solid #8a8a8a;border-radius:3px;box-sizing:border-box;background:#efefef;"></div>
<div id="t64" style="left:-228.7px;width:800px;text-align:center;transform-origin:50% 50%;top:954.9px;font-size:12px;line-height:12px;color:#333;font-weight:400;white-space:nowrap;transform:scaleX(0.9603);-webkit-text-stroke:0.3px #333;"><span>Создать</span></div>
<svg style="left:220px;top:957px" width="10" height="10"><path d="M1.8 1.8 L8 8 M8 1.8 L1.8 8" stroke="#d8824e" stroke-width="2"/></svg>
<div id="t65" style="left:232.9px;transform-origin:0 50%;top:955.8px;font-size:12px;line-height:12px;color:#d8824e;font-weight:400;white-space:nowrap;transform:scaleX(0.9637);-webkit-text-stroke:0.3px #d8824e;"><span>Отмена</span></div>
</body></html>
